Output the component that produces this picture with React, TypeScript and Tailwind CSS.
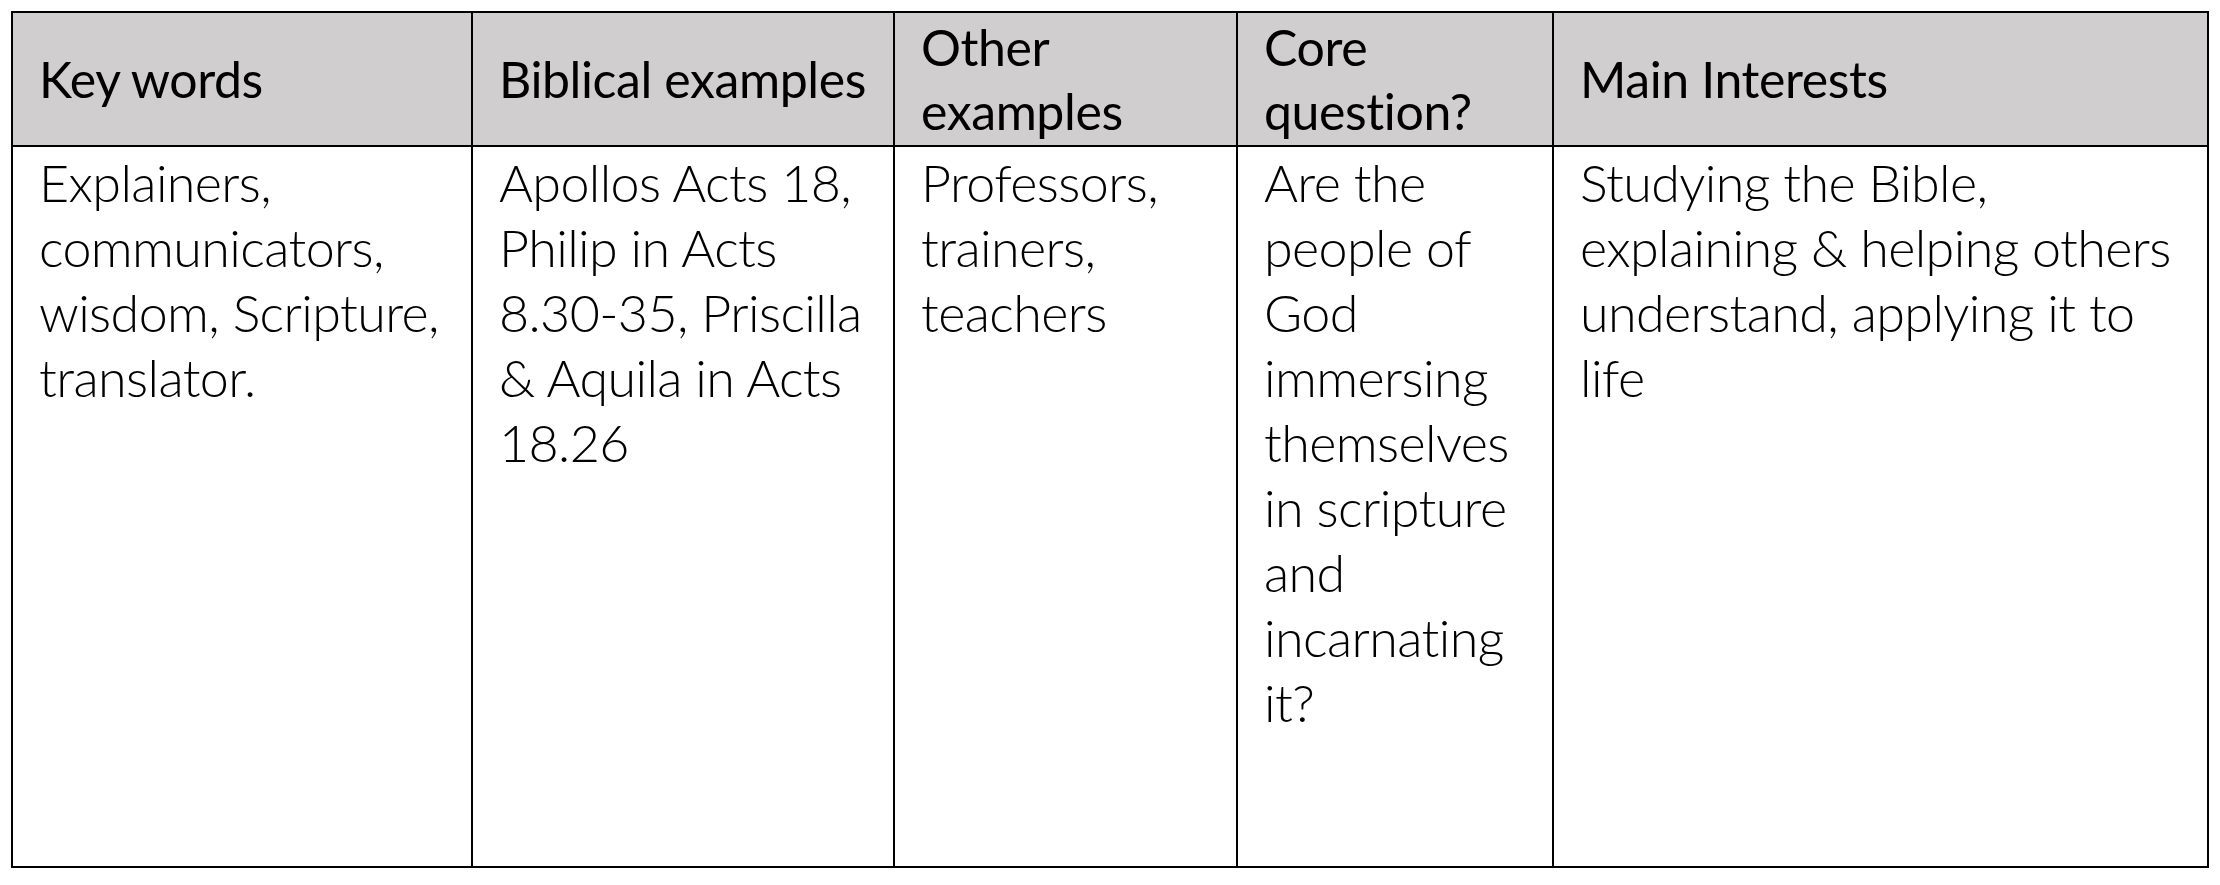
const headers: string[][] = [
  ["Key words"],
  ["Biblical examples"],
  ["Other", "examples"],
  ["Core", "question?"],
  ["Main Interests"],
];

const rows: string[][] = [
  ["Explainers,", "communicators,", "wisdom, Scripture,", "translator."],
  ["Apollos Acts 18,", "Philip in Acts", "8.30-35, Priscilla", "& Aquila in Acts", "18.26"],
  ["Professors,", "trainers,", "teachers"],
  [
    "Are the",
    "people of",
    "God",
    "immersing",
    "themselves",
    "in scripture",
    "and",
    "incarnating",
    "it?",
  ],
  ["Studying the Bible,", "explaining & helping others", "understand, applying it to", "life"],
];

export default function App() {
  return (
    <div className="min-h-screen w-full bg-white pt-[11px] pl-[11px] font-['Lato','Liberation_Sans',sans-serif] text-black [font-variant-ligatures:none]">
      <div className="grid w-[2198px] grid-cols-[458px_420px_341px_314px_653px] grid-rows-[132px_719px] gap-[2px] bg-black p-[2px]">
        {headers.map((lines, i) => (
          <div
            key={i}
            className="flex flex-col justify-center bg-[#d0cece] pl-[26px] text-[50px] leading-[64px] tracking-[-0.4px]"
          >
            {lines.map((l) => (
              <div key={l} className="whitespace-nowrap">
                {l}
              </div>
            ))}
          </div>
        ))}
        {rows.map((lines, i) => (
          <div
            key={i}
            className="bg-white pt-[3px] pl-[26px] text-[52px] leading-[65px] font-light tracking-[-0.6px]"
          >
            {lines.map((l) => (
              <div key={l} className="whitespace-nowrap">
                {l}
              </div>
            ))}
          </div>
        ))}
      </div>
    </div>
  );
}
